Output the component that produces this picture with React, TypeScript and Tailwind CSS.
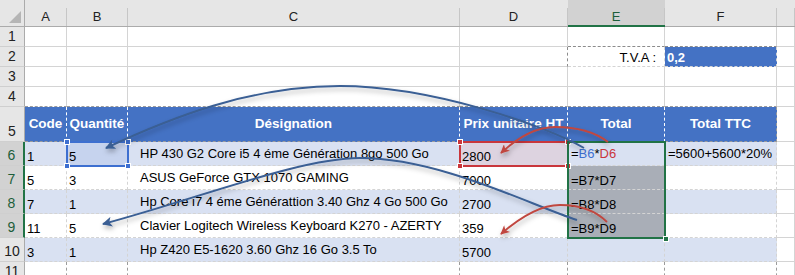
import React from "react";

// Sheet geometry: row-header gutter + columns A..F + a sliver of G
const GRID =
  "grid grid-cols-[25px_42px_61px_332px_108px_97px_112px_1fr] grid-rows-[27px_20px_20px_20px_20px_35px_24px_24px_24px_24px_24px_1fr]";

const LETTERS = ["A", "B", "C", "D", "E", "F", ""];

const HEAD = ["Code", "Quantité", "Désignation", "Prix unitaire HT", "Total", "Total TTC"];

const Ref = ({ b, d }: { b: string; d: string }) => (
  <span>
    =<span className="text-[#3d6fd0]">{b}</span>*<span className="text-[#c9363c]">{d}</span>
  </span>
);

const DATA: Record<number, React.ReactNode[]> = {
  6: ["1", "5", "HP 430 G2 Core i5 4 éme Génération 8go 500 Go", "2800", <Ref key="r" b="B6" d="D6" />, "=5600+5600*20%"],
  7: ["5", "3", "ASUS GeForce GTX 1070 GAMING", "7000", "=B7*D7", ""],
  8: ["7", "1", "Hp Core i7 4 éme Générattion 3.40 Ghz 4 Go 500 Go", "2700", "=B8*D8", ""],
  9: ["11", "5", "Clavier Logitech Wireless Keyboard K270 - AZERTY", "359", "=B9*D9", ""],
  10: ["3", "1", "Hp Z420 E5-1620 3.60 Ghz 16 Go 3.5 To", "5700", "", ""],
};

function cellClass(r: number, c: number) {
  const cls = [
    "relative flex min-w-0 overflow-hidden whitespace-nowrap border-r border-b border-[#d4d4d4] px-[2px] leading-[16px]",
  ];
  const table = c <= 5;
  if (r === 1 && (c === 4 || c === 5)) cls.push("[border-bottom-style:dashed] border-b-[#8c8c8c]");
  if (r === 2 && c === 3) cls.push("[border-right-style:dashed] border-r-[#8c8c8c]");
  if (r === 2 && c === 4) cls.push("border-dashed border-[#8c8c8c] items-end justify-end pr-[8px]");
  if (r === 2 && c === 5) cls.push("border-dashed border-[#8c8c8c] bg-[#4472c4] text-white font-bold items-end");
  if (r === 4 && table) cls.push("[border-bottom-style:dashed] border-b-[#9b9b9b]");
  if (r === 5 && table) {
    cls.push("bg-[#4472c4] text-white font-bold text-[13.5px] items-center justify-center border-dashed border-b-[#9b9b9b]");
    cls.push(c === 5 ? "border-r-[#9b9b9b]" : "border-r-white");
  }
  if (r >= 6 && r <= 10 && table) {
    cls.push("border-dashed border-[#9b9b9b]");
    if (c === 2 || (c === 4 && r === 6) || (c === 5 && r === 6)) cls.push("items-center");
    else cls.push("items-end");
    if (c === 2) cls.push("pl-[12px]");
    if (c === 4 || c === 5) cls.push("pl-[3px]");
    if (r === 6 && c === 1) cls.push("bg-[#c6d3ee]");
    else if (r === 6 && c === 3) cls.push("bg-[#ddd3e0]");
    else if (c === 4 && r >= 7 && r <= 9) cls.push("bg-[#a9aeb7]");
    else if (r % 2 === 0) cls.push("bg-[#d9e1f2]");
  }
  if (r === 11 && table) cls.push("[border-right-style:dashed] border-r-[#9b9b9b] border-b-0");
  return cls.join(" ");
}

function text(r: number, c: number): React.ReactNode {
  if (r === 5 && c <= 5) return HEAD[c];
  if (r === 2 && c === 4) return "T.V.A :";
  if (r === 2 && c === 5) return "0,2";
  return DATA[r]?.[c] ?? "";
}

function Handle({ pos, color }: { pos: string; color: string }) {
  return <div className={`absolute h-[6px] w-[6px] border border-white ${pos} ${color}`} />;
}

function Arrows() {
  return (
    <svg className="pointer-events-none absolute inset-0" width={795} height={275} viewBox="0 0 795 275">
      <defs>
        <filter id="soft" x="-10%" y="-30%" width="120%" height="160%">
          <feDropShadow dx="1" dy="3" stdDeviation="2.5" floodColor="#000" floodOpacity="0.3" />
        </filter>
        <marker id="headBlue" viewBox="0 0 10 10" refX="9" refY="5" markerWidth="12" markerHeight="10" markerUnits="userSpaceOnUse" orient="auto">
          <path d="M0,0 L10,5 L0,10 L2.5,5 z" fill="#3a5f94" />
        </marker>
        <marker id="headRed" viewBox="0 0 10 10" refX="9" refY="5" markerWidth="11" markerHeight="9" markerUnits="userSpaceOnUse" orient="auto">
          <path d="M0,0 L10,5 L0,10 L2.5,5 z" fill="#c0473f" />
        </marker>
      </defs>
      <g fill="none" filter="url(#soft)">
        <path d="M584,148 C545,125 430,86 340,86 C250,86 170,118 106,148" stroke="#3a5f94" strokeWidth="2" markerEnd="url(#headBlue)" />
        <path d="M577,220 C530,205 440,158 360,158 C300,158 200,198 103,224" stroke="#3a5f94" strokeWidth="2" markerEnd="url(#headBlue)" />
        <path d="M608,142 C595,132 575,127 555,127 C535,127 515,140 501,153" stroke="#c0473f" strokeWidth="1.8" markerEnd="url(#headRed)" />
        <path d="M607,222 C595,210 578,205 560,205 C538,205 517,220 501,234" stroke="#c0473f" strokeWidth="1.8" markerEnd="url(#headRed)" />
      </g>
    </svg>
  );
}

export default function App() {
  const rows = Array.from({ length: 11 }, (_, i) => i + 1);
  return (
    <div className="relative h-[275px] w-[795px] overflow-hidden bg-white font-['Liberation_Sans',Arial,sans-serif] text-[13px] text-black">
      <div className={`${GRID} h-full w-full`}>
        {/* corner */}
        <div className="flex items-end justify-end border-r border-b border-[#ababab] bg-[#e6e6e6] pr-[3px] pb-[3px]">
          <svg width="12" height="12" viewBox="0 0 12 12">
            <polygon points="12,0 12,12 0,12" fill="#b5b5b5" />
          </svg>
        </div>
        {/* column letters */}
        {LETTERS.map((l, i) => (
          <div
            key={l + i}
            className={`border-b pt-[8px] text-[13px] ${
              i === 4 ? "border-b-2 border-[#217346] bg-[#d2d2d2] text-[#1d5e3a]" : "border-[#ababab] bg-[#e6e6e6] text-[#222]"
            }`}
          >
            <div className="flex h-full items-center justify-center border-r border-[#c6c6c6]">{l}</div>
          </div>
        ))}
        {rows.map((r) => (
          <React.Fragment key={r}>
            <div
              className={`flex items-end justify-center border-b border-[#cfcfcf] pb-[1px] text-[14px] leading-[18px] ${
                r >= 6 && r <= 9
                  ? "border-r-2 border-r-[#217346] bg-[#d2d2d2] text-[#1d5e3a]"
                  : "border-r border-r-[#ababab] bg-[#e6e6e6] text-[#222]"
              }`}
            >
              {r}
            </div>
            {LETTERS.map((_, c) => (
              <div key={c} className={cellClass(r, c)}>
                {text(r, c)}
              </div>
            ))}
          </React.Fragment>
        ))}
      </div>

      {/* selection frames */}
      <div className={`${GRID} pointer-events-none absolute inset-0`}>
        <div className="relative col-start-3 row-start-7">
          <div className="absolute -inset-[1px] border-2 border-[#3d6fd0]" />
          <Handle pos="-left-[3px] -top-[3px]" color="bg-[#3d6fd0]" />
          <Handle pos="-right-[3px] -top-[3px]" color="bg-[#3d6fd0]" />
          <Handle pos="-left-[3px] -bottom-[3px]" color="bg-[#3d6fd0]" />
          <Handle pos="-right-[3px] -bottom-[3px]" color="bg-[#3d6fd0]" />
        </div>
        <div className="relative col-start-5 row-start-7">
          <div className="absolute -inset-[1px] border-2 border-[#c9363c]" />
          <Handle pos="-left-[3px] -top-[3px]" color="bg-[#c9363c]" />
          <Handle pos="-right-[3px] -top-[3px]" color="bg-[#c9363c]" />
          <Handle pos="-left-[3px] -bottom-[3px]" color="bg-[#c9363c]" />
          <Handle pos="-right-[3px] -bottom-[3px]" color="bg-[#c9363c]" />
        </div>
        <div className="relative col-start-6 row-span-4 row-start-7">
          <div className="absolute -inset-[1px] border-2 border-[#217346]" />
          <Handle pos="-right-[4px] -bottom-[4px]" color="bg-[#217346]" />
        </div>
      </div>

      <Arrows />
    </div>
  );
}
